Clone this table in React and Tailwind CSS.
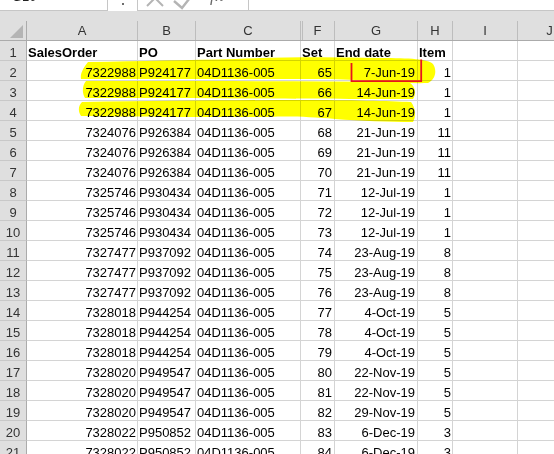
const data = [
  ["7322988", "P924177", "04D1136-005", "65", "7-Jun-19", "1"],
  ["7322988", "P924177", "04D1136-005", "66", "14-Jun-19", "1"],
  ["7322988", "P924177", "04D1136-005", "67", "14-Jun-19", "1"],
  ["7324076", "P926384", "04D1136-005", "68", "21-Jun-19", "11"],
  ["7324076", "P926384", "04D1136-005", "69", "21-Jun-19", "11"],
  ["7324076", "P926384", "04D1136-005", "70", "21-Jun-19", "11"],
  ["7325746", "P930434", "04D1136-005", "71", "12-Jul-19", "1"],
  ["7325746", "P930434", "04D1136-005", "72", "12-Jul-19", "1"],
  ["7325746", "P930434", "04D1136-005", "73", "12-Jul-19", "1"],
  ["7327477", "P937092", "04D1136-005", "74", "23-Aug-19", "8"],
  ["7327477", "P937092", "04D1136-005", "75", "23-Aug-19", "8"],
  ["7327477", "P937092", "04D1136-005", "76", "23-Aug-19", "8"],
  ["7328018", "P944254", "04D1136-005", "77", "4-Oct-19", "5"],
  ["7328018", "P944254", "04D1136-005", "78", "4-Oct-19", "5"],
  ["7328018", "P944254", "04D1136-005", "79", "4-Oct-19", "5"],
  ["7328020", "P949547", "04D1136-005", "80", "22-Nov-19", "5"],
  ["7328020", "P949547", "04D1136-005", "81", "22-Nov-19", "5"],
  ["7328020", "P949547", "04D1136-005", "82", "29-Nov-19", "5"],
  ["7328022", "P950852", "04D1136-005", "83", "6-Dec-19", "3"],
  ["7328022", "P950852", "04D1136-005", "84", "6-Dec-19", "3"],
];

const cell = "h-[20px] shrink-0 border-r border-b border-[#d4d4d4] pt-[2px] leading-[19px] whitespace-nowrap overflow-hidden";
const rowHead =
  "h-[20px] w-[27px] shrink-0 border-r border-b border-r-[#ababab] border-b-[#c8c8c8] bg-[#dfdfdf] text-center pt-[2px] leading-[19px] text-[#333]";
const colHead =
  "h-full shrink-0 border-r border-[#bdbdbd] text-center leading-[19px] text-[#333]";

function Row({ n, cells, bold }) {
  const [a, b, c, f, g, h] = cells;
  const w = bold ? "font-bold" : "";
  return (
    <div className="flex">
      <div className={rowHead}>{n}</div>
      <div className={`${cell} w-[111px] ${bold ? "text-left pl-[1px]" : "text-right pr-[1px]"} ${w}`}>{a}</div>
      <div className={`${cell} w-[58px] text-left pl-[1px] ${w}`}>{b}</div>
      <div className={`${cell} w-[105px] text-left pl-[1px] ${w}`}>{c}</div>
      <div className={`${cell} w-[34px] ${bold ? "text-left pl-[1px]" : "text-right pr-[2px]"} ${w}`}>{f}</div>
      <div className={`${cell} w-[83px] ${bold ? "text-left pl-[1px]" : "text-right pr-[2px]"} ${w}`}>{g}</div>
      <div className={`${cell} w-[35px] ${bold ? "text-left pl-[1px]" : "text-right pr-[1px]"} ${w}`}>{h}</div>
      <div className={`${cell} w-[65px]`}></div>
      <div className={`${cell} w-[64px]`}></div>
    </div>
  );
}

export default function App() {
  return (
    <div className="relative w-[554px] h-[454px] overflow-hidden bg-white font-['Liberation_Sans',Arial,sans-serif] text-[13px] text-black">
      {/* formula bar */}
      <div className="flex h-[11px] bg-white">
        <div className="w-[108px] shrink-0 border-r border-b border-[#c6c6c6] overflow-hidden">
          <div className="-mt-[13px] pl-[12px] leading-[19px] text-[#222]">G10</div>
        </div>
        <div className="w-[29px] shrink-0 flex justify-center pt-[3px]">
          <div className="w-[2px] h-[2px] bg-[#6d6d6d]"></div>
        </div>
        <div className="w-[112px] shrink-0 border-l border-r border-b border-[#c6c6c6] overflow-hidden flex">
          <svg width="110" height="10" viewBox="0 0 110 10" className="shrink-0">
            <line x1="9" y1="6" x2="25" y2="-10" stroke="#b4b4b4" strokeWidth="2" />
            <line x1="25" y1="6" x2="9" y2="-10" stroke="#b4b4b4" strokeWidth="2" />
            <polyline points="36,1 44,8 55,-6" fill="none" stroke="#b4b4b4" strokeWidth="2.4" />
          </svg>
          <div className="-ml-[38px] -mt-[14px] font-['Liberation_Serif',serif] italic text-[17px] leading-[19px] text-[#6a6a6a] tracking-[1px]">
            fx
          </div>
        </div>
        <div className="flex-1 border-b border-[#c6c6c6]"></div>
      </div>

      {/* gap strip */}
      <div className="h-[10px] bg-[#dfdfdf]"></div>

      {/* column header */}
      <div className="flex h-[20px] bg-[#dfdfdf] border-b border-[#ababab]">
        <div className="relative w-[27px] shrink-0 h-full border-r border-[#ababab]">
          <svg width="26" height="19" viewBox="0 0 26 19" className="absolute left-0 top-0">
            <polygon points="10,17 23,17 23,4" fill="#b4b4b4" />
          </svg>
        </div>
        <div className={`${colHead} w-[111px]`}>A</div>
        <div className={`${colHead} w-[58px]`}>B</div>
        <div className={`${colHead} w-[105px]`}>C</div>
        <div className={`${colHead} w-[34px] shadow-[inset_1px_0_0_#dfdfdf,inset_2px_0_0_#bdbdbd]`}>F</div>
        <div className={`${colHead} w-[83px]`}>G</div>
        <div className={`${colHead} w-[35px]`}>H</div>
        <div className={`${colHead} w-[65px]`}>I</div>
        <div className={`${colHead} w-[64px]`}>J</div>
      </div>

      {/* grid */}
      <div className="flex flex-col">
        <Row n={1} bold cells={["SalesOrder", "PO", "Part Number", "Set", "End date", "Item"]} />
        {data.map((r, i) => (
          <Row key={i} n={i + 2} cells={r} />
        ))}
      </div>

      {/* highlighter strokes */}
      <svg
        width="554"
        height="454"
        viewBox="0 0 554 454"
        className="absolute left-0 top-0 pointer-events-none mix-blend-multiply"
      >
        <path
          d="M88,62 C140,61 190,60 235,59 C280,57 330,57 380,58 C410,58 428,59 433,64 C437,70 436,79 428,83 C405,84 370,80 330,79 L81,79 C80,73 84,67 88,62 Z"
          fill="#ffff00"
        />
        <path
          d="M86,81 C180,81 300,81 408,82 C415,85 417,93 413,99 C330,99 200,98 85,98 C82,93 82,86 86,81 Z"
          fill="#ffff00"
        />
        <path
          d="M82,102 C160,101 230,100 300,100 C350,100 390,101 411,102 C416,108 416,117 413,122 C390,122 360,121 335,119 C310,117 290,116 270,117 C200,117 130,117 81,116 C78,111 78,106 82,102 Z"
          fill="#ffff00"
        />
      </svg>

      {/* red annotation */}
      <svg width="554" height="454" viewBox="0 0 554 454" className="absolute left-0 top-0 pointer-events-none">
        <path d="M351.5,63 L351.5,81.2 L421.2,81.2 L421.2,59.5" fill="none" stroke="#e8141c" strokeWidth="1.8" />
      </svg>
    </div>
  );
}
